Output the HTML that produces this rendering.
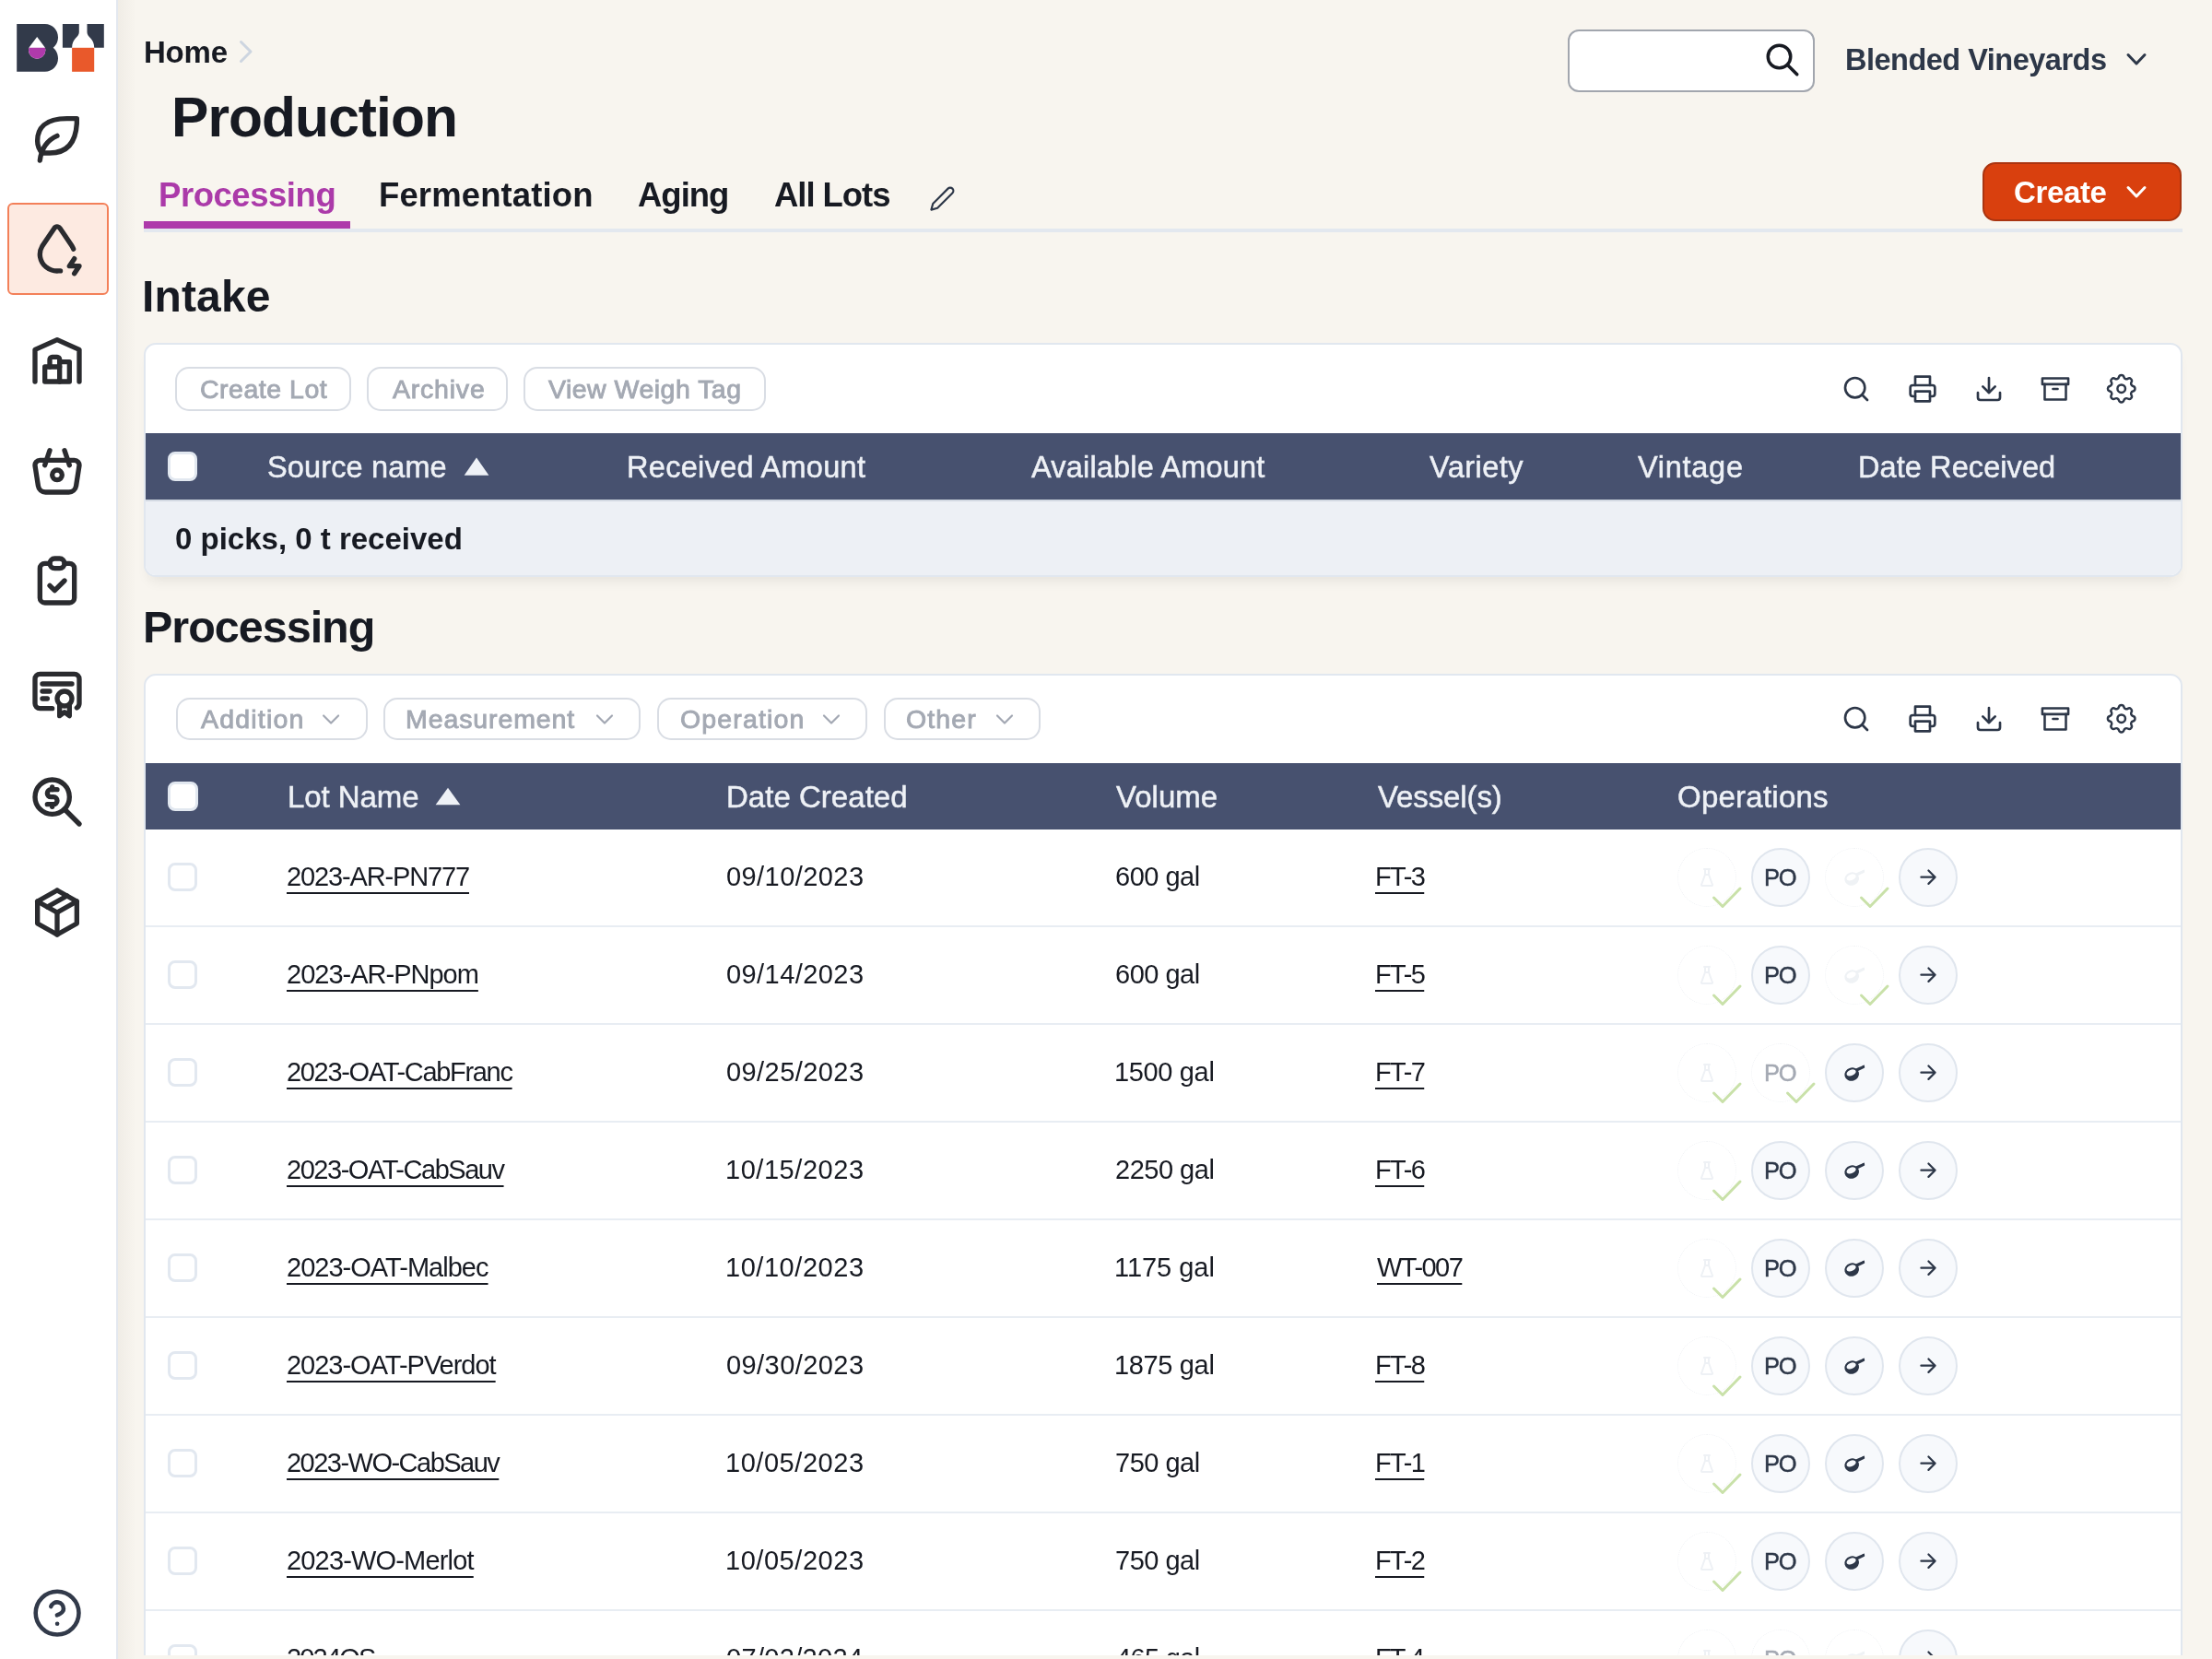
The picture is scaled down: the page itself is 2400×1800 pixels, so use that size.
<!DOCTYPE html><html><head><meta charset="utf-8"><style>
html,body{margin:0;padding:0}
body{width:2400px;height:1800px;overflow:hidden;position:relative;background:#f8f5ef;font-family:"Liberation Sans",sans-serif;}
.t{position:absolute;white-space:nowrap;will-change:transform;}
.ic{position:absolute;overflow:visible}
.abs{position:absolute;box-sizing:border-box}
</style></head><body>

<div class="abs" style="left:0;top:0;width:128px;height:1800px;background:#fff;border-right:2px solid #e3e8ef"></div>
<div class="abs" style="left:128px;top:0;width:20px;height:1800px;background:linear-gradient(to right,rgba(60,50,30,0.045),rgba(60,50,30,0))"></div>
<svg class="ic" style="left:0;top:0;width:126px;height:100px" viewBox="0 0 126 100">
<path fill="#323a4a" d="M18.2 26H48.8C57 26 63 32.5 63 40.5C63 45.5 60.5 49.5 57.7 51.8C60.5 54 63 58.5 63 63.3C63 71.3 57 77.8 48.8 77.8H18.2Z"/>
<path fill="#fff" d="M40.2 39.9L47.9 50.3C48.9 51.8 49.35 53.1 49.35 54.6A9.15 9.15 0 0 1 31.05 54.6C31.05 53.1 31.5 51.8 32.5 50.3Z"/>
<path fill="#b03aab" d="M31.55 51.8H48.85C49.2 52.7 49.35 53.6 49.35 54.6A9.15 9.15 0 0 1 31.05 54.6C31.05 53.6 31.2 52.7 31.55 51.8Z"/>
<path fill="#323a4a" d="M67.9 26H85.8V34.9C85.8 37.5 84 39.5 82 41.5C79.8 43.8 78.1 47 78.1 51.8H67.9Z"/>
<path fill="#323a4a" d="M94.5 26H112.8V51.8H102.2C102.2 47 100.5 43.8 98.3 41.5C96.3 39.5 94.5 37.5 94.5 34.9Z"/>
<rect x="78.1" y="51.8" width="24.1" height="26" fill="#e9592b"/>
</svg>
<div class="abs" style="left:8px;top:220px;width:110px;height:99.5px;background:#fdeae1;border:2px solid #f38059;border-radius:6px"></div>
<svg class="ic" style="left:30px;top:118px;width:64px;height:64px;" viewBox="0 0 24 24" fill="none" stroke="#2a2b2f" stroke-width="2" stroke-linecap="round" stroke-linejoin="round"><path d="M5 21c.5 -4.5 2.5 -8 7 -10"/><path d="M9 18c6.218 0 10.5 -3.288 11 -12v-2h-4.014c-9 0 -11.986 4 -12 9c0 1 0 3 2 5h3z"/></svg>
<svg class="ic" style="left:30px;top:238px;width:64px;height:64px;" viewBox="0 0 24 24" fill="none" stroke="#2a2b2f" stroke-width="2" stroke-linecap="round" stroke-linejoin="round"><path d="M18.628 12.076a6.653 6.653 0 0 0 -.564 -1.199l-4.89 -7.26c-.42 -.625 -1.287 -.803 -1.936 -.397a1.376 1.376 0 0 0 -.41 .397l-4.893 7.26c-1.695 2.838 -1.035 6.441 1.567 8.546a7.159 7.159 0 0 0 5.033 1.56h.8"/><path d="M19 16l-2 3h4l-2 3"/></svg>
<svg class="ic" style="left:30px;top:358px;width:64px;height:64px;" viewBox="0 0 24 24" fill="none" stroke="#2a2b2f" stroke-width="2" stroke-linecap="round" stroke-linejoin="round"><path d="M3 21v-13l9 -4l9 4v13"/><path d="M13 13h4v8h-10v-6h6"/><path d="M13 21v-9a1 1 0 0 0 -1 -1h-2a1 1 0 0 0 -1 1v3"/></svg>
<svg class="ic" style="left:30px;top:477.5px;width:64px;height:64px;" viewBox="0 0 24 24" fill="none" stroke="#2a2b2f" stroke-width="2" stroke-linecap="round" stroke-linejoin="round"><path d="M10 14a2 2 0 1 0 4 0a2 2 0 0 0 -4 0"/><path d="M5.001 8h13.999a2 2 0 0 1 1.977 2.304l-1.255 8.152a3 3 0 0 1 -2.966 2.544h-9.512a3 3 0 0 1 -2.965 -2.544l-1.255 -8.152a2 2 0 0 1 1.977 -2.304z"/><path d="M17 10l-2 -6"/><path d="M7 10l2 -6"/></svg>
<svg class="ic" style="left:30px;top:597.5px;width:64px;height:64px;" viewBox="0 0 24 24" fill="none" stroke="#2a2b2f" stroke-width="2" stroke-linecap="round" stroke-linejoin="round"><path d="M9 5h-2a2 2 0 0 0 -2 2v12a2 2 0 0 0 2 2h10a2 2 0 0 0 2 -2v-12a2 2 0 0 0 -2 -2h-2"/><path d="M9 3m0 2a2 2 0 0 1 2 -2h2a2 2 0 0 1 2 2v0a2 2 0 0 1 -2 2h-2a2 2 0 0 1 -2 -2z"/><path d="M9 14l2 2l4 -4"/></svg>
<svg class="ic" style="left:30px;top:717.75px;width:64px;height:64px;" viewBox="0 0 24 24" fill="none" stroke="#2a2b2f" stroke-width="2" stroke-linecap="round" stroke-linejoin="round"><path d="M15 15m-3 0a3 3 0 1 0 6 0a3 3 0 1 0 -6 0"/><path d="M13 17.5v4.5l2 -1.5l2 1.5v-4.5"/><path d="M10 19h-5a2 2 0 0 1 -2 -2v-10c0 -1.1 .9 -2 2 -2h14a2 2 0 0 1 2 2v10a2 2 0 0 1 -1 1.73"/><path d="M6 9l12 0"/><path d="M6 12l3 0"/><path d="M6 15l2 0"/></svg>
<svg class="ic" style="left:30px;top:837.75px;width:64px;height:64px;" viewBox="0 0 24 24" fill="none" stroke="#2a2b2f" stroke-width="2" stroke-linecap="round" stroke-linejoin="round"><path d="M10 10m-7 0a7 7 0 1 0 14 0a7 7 0 1 0 -14 0"/><path d="M21 21l-6 -6"/><path d="M12 7h-2.5a1.5 1.5 0 0 0 0 3h1a1.5 1.5 0 0 1 0 3h-2.5"/><path d="M10 13v1m0 -8v1"/></svg>
<svg class="ic" style="left:30px;top:958px;width:64px;height:64px;" viewBox="0 0 24 24" fill="none" stroke="#2a2b2f" stroke-width="2" stroke-linecap="round" stroke-linejoin="round"><path d="M12 3l8 4.5l0 9l-8 4.5l-8 -4.5l0 -9l8 -4.5"/><path d="M12 12l8 -4.5"/><path d="M12 12l0 9"/><path d="M12 12l-8 -4.5"/><path d="M16 5.25l-8 4.5"/></svg>
<svg class="ic" style="left:34px;top:1721.85px;width:56.2px;height:56.2px;" viewBox="0 0 24 24" fill="none" stroke="#323a4a" stroke-width="1.95" stroke-linecap="round" stroke-linejoin="round"><path d="M12 12m-10 0a10 10 0 1 0 20 0a10 10 0 1 0 -20 0"/><path d="M9.09 9a3 3 0 0 1 5.83 1c0 2-3 3-3 3"/><path d="M12 17h.01"/></svg>
<div class="t" style="left:155.60px;top:39.86px;font-size:33px;line-height:33px;font-weight:700;letter-spacing:-0.211px;color:#171a22;">Home</div>
<svg class="ic" style="left:0;top:0;width:1px;height:1px"><path d="M261.5 45.5L272 56L261.5 66.5" stroke="#cdd5e0" stroke-width="3" fill="none" stroke-linecap="round" stroke-linejoin="round"/></svg>
<div class="t" style="left:186.00px;top:96.57px;font-size:60.5px;line-height:60.5px;font-weight:700;letter-spacing:-0.925px;color:#171a22;">Production</div>
<div class="t" style="left:172.00px;top:194.10px;font-size:36.5px;line-height:36.5px;font-weight:700;letter-spacing:-0.453px;color:#ab3aa9;">Processing</div>
<div class="t" style="left:410.60px;top:194.10px;font-size:36.5px;line-height:36.5px;font-weight:700;letter-spacing:0.119px;color:#171a22;">Fermentation</div>
<div class="t" style="left:692.20px;top:194.10px;font-size:36.5px;line-height:36.5px;font-weight:700;letter-spacing:-0.998px;color:#171a22;">Aging</div>
<div class="t" style="left:840.00px;top:194.10px;font-size:36.5px;line-height:36.5px;font-weight:700;letter-spacing:-1.047px;color:#171a22;">All Lots</div>
<svg class="ic" style="left:1007.5px;top:201.4px;width:29px;height:29px;" viewBox="0 0 24 24" fill="none" stroke="#2d3748" stroke-width="1.8" stroke-linecap="round" stroke-linejoin="round"><path d="M17 3a2.828 2.828 0 1 1 4 4L7.5 20.5 2 22l1.5-5.5L17 3z"/></svg>
<div class="abs" style="left:156px;top:248px;width:2212px;height:4px;background:#e3e8ef"></div>
<div class="abs" style="left:156.3px;top:240px;width:223.7px;height:8px;background:#ae3aaa"></div>
<div class="abs" style="left:1701px;top:32px;width:268px;height:68px;background:#fff;border:2px solid #a2a6ae;border-radius:12px"></div>
<svg class="ic" style="left:1913px;top:44px;width:42px;height:42px;" viewBox="0 0 24 24" fill="none" stroke="#171a22" stroke-width="2" stroke-linecap="round" stroke-linejoin="round"><path d="M10 10m-7 0a7 7 0 1 0 14 0a7 7 0 1 0 -14 0"/><path d="M21 21l-6 -6"/></svg>
<div class="t" style="left:2001.90px;top:48.98px;font-size:32.5px;line-height:32.5px;font-weight:700;letter-spacing:-0.502px;color:#2d3748;">Blended Vineyards</div>
<svg class="ic" style="left:0;top:0;width:1px;height:1px"><path d="M2309 59.5L2318 69L2327 59.5" stroke="#2d3748" stroke-width="3" fill="none" stroke-linecap="round" stroke-linejoin="round"/></svg>
<div class="abs" style="left:2150.8px;top:176px;width:216.7px;height:63.5px;background:#d9400e;border:2px solid #aa3410;border-radius:14px"></div>
<div class="t" style="left:2185.00px;top:192.46px;font-size:33px;line-height:33px;font-weight:700;letter-spacing:-0.374px;color:#ffffff;">Create</div>
<svg class="ic" style="left:0;top:0;width:1px;height:1px"><path d="M2309 203.5L2318 213L2327 203.5" stroke="#ffffff" stroke-width="3" fill="none" stroke-linecap="round" stroke-linejoin="round"/></svg>
<div class="t" style="left:154.40px;top:297.86px;font-size:48px;line-height:48px;font-weight:700;letter-spacing:0.154px;color:#171a22;">Intake</div>
<div class="abs" style="left:156px;top:372px;width:2212px;height:254px;background:#fff;border:2px solid #e1e7ef;border-radius:13px;box-shadow:0 10px 14px -6px rgba(30,30,30,0.085);overflow:hidden"><div class="abs" style="left:0;top:96px;width:2210px;height:72px;background:#47516f"></div><div class="abs" style="left:0;top:168px;width:2210px;height:84px;background:#edf0f5;border-top:2px solid #d3d9e2"></div></div>
<div class="abs" style="left:190.2px;top:398px;width:191.3px;height:47.6px;border:2px solid #d9dde4;border-radius:15px;background:#fff"></div>
<div class="t" style="left:216.75px;top:407.87px;font-size:28.5px;line-height:28.5px;letter-spacing:0.515px;color:#a4a9b3;-webkit-text-stroke:0.9px #a4a9b3;">Create Lot</div>
<div class="abs" style="left:398.3px;top:398px;width:153.2px;height:47.6px;border:2px solid #d9dde4;border-radius:15px;background:#fff"></div>
<div class="t" style="left:425.75px;top:407.87px;font-size:28.5px;line-height:28.5px;letter-spacing:0.786px;color:#a4a9b3;-webkit-text-stroke:0.9px #a4a9b3;">Archive</div>
<div class="abs" style="left:568.2px;top:398px;width:263.3px;height:47.6px;border:2px solid #d9dde4;border-radius:15px;background:#fff"></div>
<div class="t" style="left:595.45px;top:407.87px;font-size:28.5px;line-height:28.5px;letter-spacing:0.480px;color:#a4a9b3;-webkit-text-stroke:0.9px #a4a9b3;">View Weigh Tag</div>
<svg class="ic" style="left:1998.2px;top:406px;width:32px;height:32px;" viewBox="0 0 24 24" fill="none" stroke="#2d3748" stroke-width="2" stroke-linecap="round" stroke-linejoin="round"><path d="M11 11m-8 0a8 8 0 1 0 16 0a8 8 0 1 0 -16 0"/><path d="M21 21l-4.3 -4.3"/></svg><svg class="ic" style="left:2070px;top:406px;width:32px;height:32px;" viewBox="0 0 24 24" fill="none" stroke="#2d3748" stroke-width="2" stroke-linecap="round" stroke-linejoin="round"><path d="M6 9V2h12v7"/><path d="M6 18H4a2 2 0 0 1-2-2v-5a2 2 0 0 1 2-2h16a2 2 0 0 1 2 2v5a2 2 0 0 1-2 2h-2"/><path d="M6 14h12v8h-12z"/></svg><svg class="ic" style="left:2142px;top:406px;width:32px;height:32px;" viewBox="0 0 24 24" fill="none" stroke="#2d3748" stroke-width="2" stroke-linecap="round" stroke-linejoin="round"><path d="M21 15v4a2 2 0 0 1-2 2H5a2 2 0 0 1-2-2v-4"/><path d="M7 10l5 5l5 -5"/><path d="M12 15V3"/></svg><svg class="ic" style="left:2214px;top:406px;width:32px;height:32px;transform:scale(0.96)" viewBox="0 0 24 24" fill="none" stroke="#2d3748" stroke-width="2" stroke-linecap="round" stroke-linejoin="round"><path d="M21 8v13H3V8"/><path d="M1 3h22v5H1z"/><path d="M10 12h4"/></svg><svg class="ic" style="left:2282.3px;top:402.3px;width:39.4px;height:39.4px;" viewBox="0 0 24 24" fill="none" stroke="#2d3748" stroke-width="1.5" stroke-linecap="round" stroke-linejoin="round"><path d="M10.325 4.317c.426 -1.756 2.924 -1.756 3.35 0a1.724 1.724 0 0 0 2.573 1.066c1.543 -.94 3.31 .826 2.37 2.37a1.724 1.724 0 0 0 1.065 2.572c1.756 .426 1.756 2.924 0 3.35a1.724 1.724 0 0 0 -1.066 2.573c.94 1.543 -.826 3.31 -2.37 2.37a1.724 1.724 0 0 0 -2.572 1.065c-.426 1.756 -2.924 1.756 -3.35 0a1.724 1.724 0 0 0 -2.573 -1.066c-1.543 .94 -3.31 -.826 -2.37 -2.37a1.724 1.724 0 0 0 -1.065 -2.572c-1.756 -.426 -1.756 -2.924 0 -3.35a1.724 1.724 0 0 0 1.066 -2.573c-.94 -1.543 .826 -3.31 2.37 -2.37c1 .608 2.296 .07 2.572 -1.065z"/><path d="M9.4 12a2.6 2.6 0 1 0 5.2 0a2.6 2.6 0 0 0 -5.2 0"/></svg>
<div class="abs" style="left:181.8px;top:489.7px;width:32.5px;height:32px;background:#fff;border:3.8px solid #e2e8f0;border-radius:8px"></div>
<div class="t" style="left:289.75px;top:490.98px;font-size:32.5px;line-height:32.5px;letter-spacing:0.137px;color:#eef1f6;-webkit-text-stroke:0.5px #eef1f6;">Source name</div>
<svg class="ic" style="left:0;top:0;width:1px;height:1px"><path d="M503.7 515.8L517 496.4L530.4 515.8Z" fill="#eef1f6"/></svg>
<div class="t" style="left:679.95px;top:490.98px;font-size:32.5px;line-height:32.5px;letter-spacing:0.307px;color:#eef1f6;-webkit-text-stroke:0.5px #eef1f6;">Received Amount</div>
<div class="t" style="left:1118.65px;top:490.98px;font-size:32.5px;line-height:32.5px;letter-spacing:0.186px;color:#eef1f6;-webkit-text-stroke:0.5px #eef1f6;">Available Amount</div>
<div class="t" style="left:1550.65px;top:490.98px;font-size:32.5px;line-height:32.5px;letter-spacing:0.469px;color:#eef1f6;-webkit-text-stroke:0.5px #eef1f6;">Variety</div>
<div class="t" style="left:1776.95px;top:490.98px;font-size:32.5px;line-height:32.5px;letter-spacing:0.723px;color:#eef1f6;-webkit-text-stroke:0.5px #eef1f6;">Vintage</div>
<div class="t" style="left:2016.25px;top:490.98px;font-size:32.5px;line-height:32.5px;letter-spacing:0.084px;color:#eef1f6;-webkit-text-stroke:0.5px #eef1f6;">Date Received</div>
<div class="t" style="left:189.90px;top:568.06px;font-size:33px;line-height:33px;font-weight:700;letter-spacing:0.000px;color:#171a22;">0 picks, 0 t received</div>
<div class="t" style="left:154.50px;top:655.64px;font-size:48.5px;line-height:48.5px;font-weight:700;letter-spacing:-1.016px;color:#171a22;">Processing</div>
<div class="abs" style="left:0;top:0;width:2400px;height:1796px;overflow:hidden">
<div class="abs" style="left:156px;top:730.8px;width:2212px;height:1200px;background:#fff;border:2px solid #e1e7ef;border-radius:13px;overflow:hidden"><div class="abs" style="left:0;top:95.5px;width:2210px;height:71.5px;background:#47516f"></div></div>
<div class="abs" style="left:190.6px;top:756.6px;width:208.0px;height:46.3px;border:2px solid #d9dde4;border-radius:15px;background:#fff"></div>
<div class="t" style="left:217.55px;top:766.27px;font-size:28.5px;line-height:28.5px;letter-spacing:1.208px;color:#a4a9b3;-webkit-text-stroke:0.9px #a4a9b3;">Addition</div>
<svg class="ic" style="left:0;top:0;width:1px;height:1px"><path d="M351.1 776.5L359.1 784.5L367.1 776.5" stroke="#a3a8b3" stroke-width="2.2" fill="none" stroke-linecap="round" stroke-linejoin="round"/></svg>
<div class="abs" style="left:415.8px;top:756.6px;width:278.9px;height:46.3px;border:2px solid #d9dde4;border-radius:15px;background:#fff"></div>
<div class="t" style="left:440.45px;top:766.27px;font-size:28.5px;line-height:28.5px;letter-spacing:0.898px;color:#a4a9b3;-webkit-text-stroke:0.9px #a4a9b3;">Measurement</div>
<svg class="ic" style="left:0;top:0;width:1px;height:1px"><path d="M648 776.5L656 784.5L664 776.5" stroke="#a3a8b3" stroke-width="2.2" fill="none" stroke-linecap="round" stroke-linejoin="round"/></svg>
<div class="abs" style="left:712.7px;top:756.6px;width:228.3px;height:46.3px;border:2px solid #d9dde4;border-radius:15px;background:#fff"></div>
<div class="t" style="left:737.95px;top:766.27px;font-size:28.5px;line-height:28.5px;letter-spacing:1.149px;color:#a4a9b3;-webkit-text-stroke:0.9px #a4a9b3;">Operation</div>
<svg class="ic" style="left:0;top:0;width:1px;height:1px"><path d="M894 776.5L902 784.5L910 776.5" stroke="#a3a8b3" stroke-width="2.2" fill="none" stroke-linecap="round" stroke-linejoin="round"/></svg>
<div class="abs" style="left:958.5px;top:756.6px;width:170.6px;height:46.3px;border:2px solid #d9dde4;border-radius:15px;background:#fff"></div>
<div class="t" style="left:983.35px;top:766.27px;font-size:28.5px;line-height:28.5px;letter-spacing:1.103px;color:#a4a9b3;-webkit-text-stroke:0.9px #a4a9b3;">Other</div>
<svg class="ic" style="left:0;top:0;width:1px;height:1px"><path d="M1082 776.5L1090 784.5L1098 776.5" stroke="#a3a8b3" stroke-width="2.2" fill="none" stroke-linecap="round" stroke-linejoin="round"/></svg>
<svg class="ic" style="left:1998.2px;top:764px;width:32px;height:32px;" viewBox="0 0 24 24" fill="none" stroke="#2d3748" stroke-width="2" stroke-linecap="round" stroke-linejoin="round"><path d="M11 11m-8 0a8 8 0 1 0 16 0a8 8 0 1 0 -16 0"/><path d="M21 21l-4.3 -4.3"/></svg><svg class="ic" style="left:2070px;top:764px;width:32px;height:32px;" viewBox="0 0 24 24" fill="none" stroke="#2d3748" stroke-width="2" stroke-linecap="round" stroke-linejoin="round"><path d="M6 9V2h12v7"/><path d="M6 18H4a2 2 0 0 1-2-2v-5a2 2 0 0 1 2-2h16a2 2 0 0 1 2 2v5a2 2 0 0 1-2 2h-2"/><path d="M6 14h12v8h-12z"/></svg><svg class="ic" style="left:2142px;top:764px;width:32px;height:32px;" viewBox="0 0 24 24" fill="none" stroke="#2d3748" stroke-width="2" stroke-linecap="round" stroke-linejoin="round"><path d="M21 15v4a2 2 0 0 1-2 2H5a2 2 0 0 1-2-2v-4"/><path d="M7 10l5 5l5 -5"/><path d="M12 15V3"/></svg><svg class="ic" style="left:2214px;top:764px;width:32px;height:32px;transform:scale(0.96)" viewBox="0 0 24 24" fill="none" stroke="#2d3748" stroke-width="2" stroke-linecap="round" stroke-linejoin="round"><path d="M21 8v13H3V8"/><path d="M1 3h22v5H1z"/><path d="M10 12h4"/></svg><svg class="ic" style="left:2282.3px;top:760.3px;width:39.4px;height:39.4px;" viewBox="0 0 24 24" fill="none" stroke="#2d3748" stroke-width="1.5" stroke-linecap="round" stroke-linejoin="round"><path d="M10.325 4.317c.426 -1.756 2.924 -1.756 3.35 0a1.724 1.724 0 0 0 2.573 1.066c1.543 -.94 3.31 .826 2.37 2.37a1.724 1.724 0 0 0 1.065 2.572c1.756 .426 1.756 2.924 0 3.35a1.724 1.724 0 0 0 -1.066 2.573c.94 1.543 -.826 3.31 -2.37 2.37a1.724 1.724 0 0 0 -2.572 1.065c-.426 1.756 -2.924 1.756 -3.35 0a1.724 1.724 0 0 0 -2.573 -1.066c-1.543 .94 -3.31 -.826 -2.37 -2.37a1.724 1.724 0 0 0 -1.065 -2.572c-1.756 -.426 -1.756 -2.924 0 -3.35a1.724 1.724 0 0 0 1.066 -2.573c-.94 -1.543 .826 -3.31 2.37 -2.37c1 .608 2.296 .07 2.572 -1.065z"/><path d="M9.4 12a2.6 2.6 0 1 0 5.2 0a2.6 2.6 0 0 0 -5.2 0"/></svg>
<div class="abs" style="left:182.4px;top:848.4px;width:32.5px;height:32px;background:#fff;border:3.8px solid #e2e8f0;border-radius:8px"></div>
<div class="t" style="left:311.55px;top:848.16px;font-size:33px;line-height:33px;letter-spacing:-0.074px;color:#eef1f6;-webkit-text-stroke:0.5px #eef1f6;">Lot Name</div>
<svg class="ic" style="left:0;top:0;width:1px;height:1px"><path d="M472.6 873.3L486 854.7L499.4 873.3Z" fill="#eef1f6"/></svg>
<div class="t" style="left:787.55px;top:848.16px;font-size:33px;line-height:33px;letter-spacing:0.025px;color:#eef1f6;-webkit-text-stroke:0.5px #eef1f6;">Date Created</div>
<div class="t" style="left:1210.75px;top:848.16px;font-size:33px;line-height:33px;letter-spacing:0.017px;color:#eef1f6;-webkit-text-stroke:0.5px #eef1f6;">Volume</div>
<div class="t" style="left:1494.95px;top:848.16px;font-size:33px;line-height:33px;letter-spacing:-0.115px;color:#eef1f6;-webkit-text-stroke:0.5px #eef1f6;">Vessel(s)</div>
<div class="t" style="left:1819.65px;top:848.16px;font-size:33px;line-height:33px;letter-spacing:0.242px;color:#eef1f6;-webkit-text-stroke:0.5px #eef1f6;">Operations</div>
<div class="abs" style="left:182.3px;top:936.4px;width:32px;height:31px;background:#fff;border:3.2px solid #e2e8f0;border-radius:8px"></div>
<div class="t" style="left:311.10px;top:937.35px;font-size:29px;line-height:29px;letter-spacing:-1.138px;color:#171a22;text-decoration:underline;text-decoration-thickness:2px;text-underline-offset:7px;">2023-AR-PN777</div>
<div class="t" style="left:787.60px;top:937.35px;font-size:29px;line-height:29px;letter-spacing:0.432px;color:#171a22;">09/10/2023</div>
<div class="t" style="left:1209.80px;top:937.35px;font-size:29px;line-height:29px;letter-spacing:-0.500px;color:#171a22;">600 gal</div>
<div class="t" style="left:1491.60px;top:937.35px;font-size:29px;line-height:29px;letter-spacing:-1.595px;color:#171a22;text-decoration:underline;text-decoration-thickness:2px;text-underline-offset:7px;">FT-3</div>
<div class="abs" style="left:1820px;top:920px;width:64px;height:64px;border-radius:50%;border:1.5px dotted #f0f2f5"></div>
<svg class="ic" style="left:1840px;top:940px;width:24px;height:24px;" viewBox="0 0 24 24" fill="none" stroke="#eef1f5" stroke-width="2" stroke-linecap="round" stroke-linejoin="round"><path d="M9 3h6"/><path d="M10 9h4"/><path d="M10 3v6l-4 11a.7 .7 0 0 0 .5 1h11a.7 .7 0 0 0 .5 -1l-4 -11v-6"/></svg>
<svg class="ic" style="left:0;top:0;width:1px;height:1px"><path d="M1859.5 974L1869 983.5L1888 964" stroke="#c9e1a9" stroke-width="3" fill="none" stroke-linecap="round" stroke-linejoin="round"/></svg>
<div class="abs" style="left:1900px;top:920px;width:64px;height:64px;border-radius:50%;background:#f7f9fc;border:2px solid #e0e6ee"></div>
<div class="t" style="left:1913.52px;top:939.71px;font-size:25.5px;line-height:25.5px;letter-spacing:-1.258px;color:#2d3748;-webkit-text-stroke:0.45px #2d3748;">PO</div>
<div class="abs" style="left:1980px;top:920px;width:64px;height:64px;border-radius:50%;border:1.5px dotted #f0f2f5"></div>
<svg class="ic" style="left:2000px;top:940px;width:24px;height:24px" viewBox="0 0 24 24"><path d="M13.5 9.2C16 8 18.5 7 21.6 5.6" stroke="#eff2f5" stroke-width="3.2" stroke-linecap="round" fill="none"/><path d="M20.5 4.2L23 3.6L22.6 6.8Z" fill="#eff2f5"/><ellipse cx="9.2" cy="13.6" rx="7.9" ry="7.2" transform="rotate(-15 9.2 13.6)" fill="#eff2f5"/><ellipse cx="8.6" cy="11.9" rx="5.3" ry="3.2" transform="rotate(-22 8.6 11.9)" fill="#ffffff"/></svg>
<svg class="ic" style="left:0;top:0;width:1px;height:1px"><path d="M2019.5 974L2029 983.5L2048 964" stroke="#c9e1a9" stroke-width="3" fill="none" stroke-linecap="round" stroke-linejoin="round"/></svg>
<div class="abs" style="left:2060px;top:920px;width:64px;height:64px;border-radius:50%;background:#f7f9fc;border:2px solid #e0e6ee"></div>
<svg class="ic" style="left:0;top:0;width:1px;height:1px"><path d="M2084.4 951.7H2099.6M2092.4 944.5L2099.6 951.7L2092.4 958.9" stroke="#2d3748" stroke-width="2.2" fill="none" stroke-linecap="round" stroke-linejoin="round"/></svg>
<div class="abs" style="left:158px;top:1004.00px;width:2208px;height:2px;background:#e8edf3"></div>
<div class="abs" style="left:182.3px;top:1042.4px;width:32px;height:31px;background:#fff;border:3.2px solid #e2e8f0;border-radius:8px"></div>
<div class="t" style="left:311.10px;top:1043.35px;font-size:29px;line-height:29px;letter-spacing:-0.996px;color:#171a22;text-decoration:underline;text-decoration-thickness:2px;text-underline-offset:7px;">2023-AR-PNpom</div>
<div class="t" style="left:787.60px;top:1043.35px;font-size:29px;line-height:29px;letter-spacing:0.432px;color:#171a22;">09/14/2023</div>
<div class="t" style="left:1209.80px;top:1043.35px;font-size:29px;line-height:29px;letter-spacing:-0.500px;color:#171a22;">600 gal</div>
<div class="t" style="left:1491.60px;top:1043.35px;font-size:29px;line-height:29px;letter-spacing:-1.595px;color:#171a22;text-decoration:underline;text-decoration-thickness:2px;text-underline-offset:7px;">FT-5</div>
<div class="abs" style="left:1820px;top:1026px;width:64px;height:64px;border-radius:50%;border:1.5px dotted #f0f2f5"></div>
<svg class="ic" style="left:1840px;top:1046px;width:24px;height:24px;" viewBox="0 0 24 24" fill="none" stroke="#eef1f5" stroke-width="2" stroke-linecap="round" stroke-linejoin="round"><path d="M9 3h6"/><path d="M10 9h4"/><path d="M10 3v6l-4 11a.7 .7 0 0 0 .5 1h11a.7 .7 0 0 0 .5 -1l-4 -11v-6"/></svg>
<svg class="ic" style="left:0;top:0;width:1px;height:1px"><path d="M1859.5 1080L1869 1089.5L1888 1070" stroke="#c9e1a9" stroke-width="3" fill="none" stroke-linecap="round" stroke-linejoin="round"/></svg>
<div class="abs" style="left:1900px;top:1026px;width:64px;height:64px;border-radius:50%;background:#f7f9fc;border:2px solid #e0e6ee"></div>
<div class="t" style="left:1913.52px;top:1045.71px;font-size:25.5px;line-height:25.5px;letter-spacing:-1.258px;color:#2d3748;-webkit-text-stroke:0.45px #2d3748;">PO</div>
<div class="abs" style="left:1980px;top:1026px;width:64px;height:64px;border-radius:50%;border:1.5px dotted #f0f2f5"></div>
<svg class="ic" style="left:2000px;top:1046px;width:24px;height:24px" viewBox="0 0 24 24"><path d="M13.5 9.2C16 8 18.5 7 21.6 5.6" stroke="#eff2f5" stroke-width="3.2" stroke-linecap="round" fill="none"/><path d="M20.5 4.2L23 3.6L22.6 6.8Z" fill="#eff2f5"/><ellipse cx="9.2" cy="13.6" rx="7.9" ry="7.2" transform="rotate(-15 9.2 13.6)" fill="#eff2f5"/><ellipse cx="8.6" cy="11.9" rx="5.3" ry="3.2" transform="rotate(-22 8.6 11.9)" fill="#ffffff"/></svg>
<svg class="ic" style="left:0;top:0;width:1px;height:1px"><path d="M2019.5 1080L2029 1089.5L2048 1070" stroke="#c9e1a9" stroke-width="3" fill="none" stroke-linecap="round" stroke-linejoin="round"/></svg>
<div class="abs" style="left:2060px;top:1026px;width:64px;height:64px;border-radius:50%;background:#f7f9fc;border:2px solid #e0e6ee"></div>
<svg class="ic" style="left:0;top:0;width:1px;height:1px"><path d="M2084.4 1057.7H2099.6M2092.4 1050.5L2099.6 1057.7L2092.4 1064.9" stroke="#2d3748" stroke-width="2.2" fill="none" stroke-linecap="round" stroke-linejoin="round"/></svg>
<div class="abs" style="left:158px;top:1110.00px;width:2208px;height:2px;background:#e8edf3"></div>
<div class="abs" style="left:182.3px;top:1148.4px;width:32px;height:31px;background:#fff;border:3.2px solid #e2e8f0;border-radius:8px"></div>
<div class="t" style="left:311.10px;top:1149.35px;font-size:29px;line-height:29px;letter-spacing:-1.320px;color:#171a22;text-decoration:underline;text-decoration-thickness:2px;text-underline-offset:7px;">2023-OAT-CabFranc</div>
<div class="t" style="left:787.60px;top:1149.35px;font-size:29px;line-height:29px;letter-spacing:0.432px;color:#171a22;">09/25/2023</div>
<div class="t" style="left:1208.80px;top:1149.35px;font-size:29px;line-height:29px;letter-spacing:-0.347px;color:#171a22;">1500 gal</div>
<div class="t" style="left:1491.60px;top:1149.35px;font-size:29px;line-height:29px;letter-spacing:-1.595px;color:#171a22;text-decoration:underline;text-decoration-thickness:2px;text-underline-offset:7px;">FT-7</div>
<div class="abs" style="left:1820px;top:1132px;width:64px;height:64px;border-radius:50%;border:1.5px dotted #f0f2f5"></div>
<svg class="ic" style="left:1840px;top:1152px;width:24px;height:24px;" viewBox="0 0 24 24" fill="none" stroke="#eef1f5" stroke-width="2" stroke-linecap="round" stroke-linejoin="round"><path d="M9 3h6"/><path d="M10 9h4"/><path d="M10 3v6l-4 11a.7 .7 0 0 0 .5 1h11a.7 .7 0 0 0 .5 -1l-4 -11v-6"/></svg>
<svg class="ic" style="left:0;top:0;width:1px;height:1px"><path d="M1859.5 1186L1869 1195.5L1888 1176" stroke="#c9e1a9" stroke-width="3" fill="none" stroke-linecap="round" stroke-linejoin="round"/></svg>
<div class="abs" style="left:1900px;top:1132px;width:64px;height:64px;border-radius:50%;border:1.5px dotted #f0f2f5"></div>
<div class="t" style="left:1913.52px;top:1151.71px;font-size:25.5px;line-height:25.5px;letter-spacing:-1.258px;color:#a4a9b3;-webkit-text-stroke:0.45px #a4a9b3;">PO</div>
<svg class="ic" style="left:0;top:0;width:1px;height:1px"><path d="M1939.5 1186L1949 1195.5L1968 1176" stroke="#c9e1a9" stroke-width="3" fill="none" stroke-linecap="round" stroke-linejoin="round"/></svg>
<div class="abs" style="left:1980px;top:1132px;width:64px;height:64px;border-radius:50%;background:#f7f9fc;border:2px solid #e0e6ee"></div>
<svg class="ic" style="left:2000px;top:1152px;width:24px;height:24px" viewBox="0 0 24 24"><path d="M13.5 9.2C16 8 18.5 7 21.6 5.6" stroke="#2d3748" stroke-width="3.2" stroke-linecap="round" fill="none"/><path d="M20.5 4.2L23 3.6L22.6 6.8Z" fill="#2d3748"/><ellipse cx="9.2" cy="13.6" rx="7.9" ry="7.2" transform="rotate(-15 9.2 13.6)" fill="#2d3748"/><ellipse cx="8.6" cy="11.9" rx="5.3" ry="3.2" transform="rotate(-22 8.6 11.9)" fill="#f7f9fc"/></svg>
<div class="abs" style="left:2060px;top:1132px;width:64px;height:64px;border-radius:50%;background:#f7f9fc;border:2px solid #e0e6ee"></div>
<svg class="ic" style="left:0;top:0;width:1px;height:1px"><path d="M2084.4 1163.7H2099.6M2092.4 1156.5L2099.6 1163.7L2092.4 1170.9" stroke="#2d3748" stroke-width="2.2" fill="none" stroke-linecap="round" stroke-linejoin="round"/></svg>
<div class="abs" style="left:158px;top:1216.00px;width:2208px;height:2px;background:#e8edf3"></div>
<div class="abs" style="left:182.3px;top:1254.4px;width:32px;height:31px;background:#fff;border:3.2px solid #e2e8f0;border-radius:8px"></div>
<div class="t" style="left:311.10px;top:1255.35px;font-size:29px;line-height:29px;letter-spacing:-1.466px;color:#171a22;text-decoration:underline;text-decoration-thickness:2px;text-underline-offset:7px;">2023-OAT-CabSauv</div>
<div class="t" style="left:786.60px;top:1255.35px;font-size:29px;line-height:29px;letter-spacing:0.543px;color:#171a22;">10/15/2023</div>
<div class="t" style="left:1209.80px;top:1255.35px;font-size:29px;line-height:29px;letter-spacing:-0.490px;color:#171a22;">2250 gal</div>
<div class="t" style="left:1491.60px;top:1255.35px;font-size:29px;line-height:29px;letter-spacing:-1.595px;color:#171a22;text-decoration:underline;text-decoration-thickness:2px;text-underline-offset:7px;">FT-6</div>
<div class="abs" style="left:1820px;top:1238px;width:64px;height:64px;border-radius:50%;border:1.5px dotted #f0f2f5"></div>
<svg class="ic" style="left:1840px;top:1258px;width:24px;height:24px;" viewBox="0 0 24 24" fill="none" stroke="#eef1f5" stroke-width="2" stroke-linecap="round" stroke-linejoin="round"><path d="M9 3h6"/><path d="M10 9h4"/><path d="M10 3v6l-4 11a.7 .7 0 0 0 .5 1h11a.7 .7 0 0 0 .5 -1l-4 -11v-6"/></svg>
<svg class="ic" style="left:0;top:0;width:1px;height:1px"><path d="M1859.5 1292L1869 1301.5L1888 1282" stroke="#c9e1a9" stroke-width="3" fill="none" stroke-linecap="round" stroke-linejoin="round"/></svg>
<div class="abs" style="left:1900px;top:1238px;width:64px;height:64px;border-radius:50%;background:#f7f9fc;border:2px solid #e0e6ee"></div>
<div class="t" style="left:1913.52px;top:1257.71px;font-size:25.5px;line-height:25.5px;letter-spacing:-1.258px;color:#2d3748;-webkit-text-stroke:0.45px #2d3748;">PO</div>
<div class="abs" style="left:1980px;top:1238px;width:64px;height:64px;border-radius:50%;background:#f7f9fc;border:2px solid #e0e6ee"></div>
<svg class="ic" style="left:2000px;top:1258px;width:24px;height:24px" viewBox="0 0 24 24"><path d="M13.5 9.2C16 8 18.5 7 21.6 5.6" stroke="#2d3748" stroke-width="3.2" stroke-linecap="round" fill="none"/><path d="M20.5 4.2L23 3.6L22.6 6.8Z" fill="#2d3748"/><ellipse cx="9.2" cy="13.6" rx="7.9" ry="7.2" transform="rotate(-15 9.2 13.6)" fill="#2d3748"/><ellipse cx="8.6" cy="11.9" rx="5.3" ry="3.2" transform="rotate(-22 8.6 11.9)" fill="#f7f9fc"/></svg>
<div class="abs" style="left:2060px;top:1238px;width:64px;height:64px;border-radius:50%;background:#f7f9fc;border:2px solid #e0e6ee"></div>
<svg class="ic" style="left:0;top:0;width:1px;height:1px"><path d="M2084.4 1269.7H2099.6M2092.4 1262.5L2099.6 1269.7L2092.4 1276.9" stroke="#2d3748" stroke-width="2.2" fill="none" stroke-linecap="round" stroke-linejoin="round"/></svg>
<div class="abs" style="left:158px;top:1322.00px;width:2208px;height:2px;background:#e8edf3"></div>
<div class="abs" style="left:182.3px;top:1360.4px;width:32px;height:31px;background:#fff;border:3.2px solid #e2e8f0;border-radius:8px"></div>
<div class="t" style="left:311.10px;top:1361.35px;font-size:29px;line-height:29px;letter-spacing:-0.977px;color:#171a22;text-decoration:underline;text-decoration-thickness:2px;text-underline-offset:7px;">2023-OAT-Malbec</div>
<div class="t" style="left:786.60px;top:1361.35px;font-size:29px;line-height:29px;letter-spacing:0.543px;color:#171a22;">10/10/2023</div>
<div class="t" style="left:1208.80px;top:1361.35px;font-size:29px;line-height:29px;letter-spacing:-0.039px;color:#171a22;">1175 gal</div>
<div class="t" style="left:1493.60px;top:1361.35px;font-size:29px;line-height:29px;letter-spacing:-1.540px;color:#171a22;text-decoration:underline;text-decoration-thickness:2px;text-underline-offset:7px;">WT-007</div>
<div class="abs" style="left:1820px;top:1344px;width:64px;height:64px;border-radius:50%;border:1.5px dotted #f0f2f5"></div>
<svg class="ic" style="left:1840px;top:1364px;width:24px;height:24px;" viewBox="0 0 24 24" fill="none" stroke="#eef1f5" stroke-width="2" stroke-linecap="round" stroke-linejoin="round"><path d="M9 3h6"/><path d="M10 9h4"/><path d="M10 3v6l-4 11a.7 .7 0 0 0 .5 1h11a.7 .7 0 0 0 .5 -1l-4 -11v-6"/></svg>
<svg class="ic" style="left:0;top:0;width:1px;height:1px"><path d="M1859.5 1398L1869 1407.5L1888 1388" stroke="#c9e1a9" stroke-width="3" fill="none" stroke-linecap="round" stroke-linejoin="round"/></svg>
<div class="abs" style="left:1900px;top:1344px;width:64px;height:64px;border-radius:50%;background:#f7f9fc;border:2px solid #e0e6ee"></div>
<div class="t" style="left:1913.52px;top:1363.71px;font-size:25.5px;line-height:25.5px;letter-spacing:-1.258px;color:#2d3748;-webkit-text-stroke:0.45px #2d3748;">PO</div>
<div class="abs" style="left:1980px;top:1344px;width:64px;height:64px;border-radius:50%;background:#f7f9fc;border:2px solid #e0e6ee"></div>
<svg class="ic" style="left:2000px;top:1364px;width:24px;height:24px" viewBox="0 0 24 24"><path d="M13.5 9.2C16 8 18.5 7 21.6 5.6" stroke="#2d3748" stroke-width="3.2" stroke-linecap="round" fill="none"/><path d="M20.5 4.2L23 3.6L22.6 6.8Z" fill="#2d3748"/><ellipse cx="9.2" cy="13.6" rx="7.9" ry="7.2" transform="rotate(-15 9.2 13.6)" fill="#2d3748"/><ellipse cx="8.6" cy="11.9" rx="5.3" ry="3.2" transform="rotate(-22 8.6 11.9)" fill="#f7f9fc"/></svg>
<div class="abs" style="left:2060px;top:1344px;width:64px;height:64px;border-radius:50%;background:#f7f9fc;border:2px solid #e0e6ee"></div>
<svg class="ic" style="left:0;top:0;width:1px;height:1px"><path d="M2084.4 1375.7H2099.6M2092.4 1368.5L2099.6 1375.7L2092.4 1382.9" stroke="#2d3748" stroke-width="2.2" fill="none" stroke-linecap="round" stroke-linejoin="round"/></svg>
<div class="abs" style="left:158px;top:1428.00px;width:2208px;height:2px;background:#e8edf3"></div>
<div class="abs" style="left:182.3px;top:1466.4px;width:32px;height:31px;background:#fff;border:3.2px solid #e2e8f0;border-radius:8px"></div>
<div class="t" style="left:311.10px;top:1467.35px;font-size:29px;line-height:29px;letter-spacing:-1.015px;color:#171a22;text-decoration:underline;text-decoration-thickness:2px;text-underline-offset:7px;">2023-OAT-PVerdot</div>
<div class="t" style="left:787.60px;top:1467.35px;font-size:29px;line-height:29px;letter-spacing:0.432px;color:#171a22;">09/30/2023</div>
<div class="t" style="left:1208.80px;top:1467.35px;font-size:29px;line-height:29px;letter-spacing:-0.347px;color:#171a22;">1875 gal</div>
<div class="t" style="left:1491.60px;top:1467.35px;font-size:29px;line-height:29px;letter-spacing:-1.595px;color:#171a22;text-decoration:underline;text-decoration-thickness:2px;text-underline-offset:7px;">FT-8</div>
<div class="abs" style="left:1820px;top:1450px;width:64px;height:64px;border-radius:50%;border:1.5px dotted #f0f2f5"></div>
<svg class="ic" style="left:1840px;top:1470px;width:24px;height:24px;" viewBox="0 0 24 24" fill="none" stroke="#eef1f5" stroke-width="2" stroke-linecap="round" stroke-linejoin="round"><path d="M9 3h6"/><path d="M10 9h4"/><path d="M10 3v6l-4 11a.7 .7 0 0 0 .5 1h11a.7 .7 0 0 0 .5 -1l-4 -11v-6"/></svg>
<svg class="ic" style="left:0;top:0;width:1px;height:1px"><path d="M1859.5 1504L1869 1513.5L1888 1494" stroke="#c9e1a9" stroke-width="3" fill="none" stroke-linecap="round" stroke-linejoin="round"/></svg>
<div class="abs" style="left:1900px;top:1450px;width:64px;height:64px;border-radius:50%;background:#f7f9fc;border:2px solid #e0e6ee"></div>
<div class="t" style="left:1913.52px;top:1469.71px;font-size:25.5px;line-height:25.5px;letter-spacing:-1.258px;color:#2d3748;-webkit-text-stroke:0.45px #2d3748;">PO</div>
<div class="abs" style="left:1980px;top:1450px;width:64px;height:64px;border-radius:50%;background:#f7f9fc;border:2px solid #e0e6ee"></div>
<svg class="ic" style="left:2000px;top:1470px;width:24px;height:24px" viewBox="0 0 24 24"><path d="M13.5 9.2C16 8 18.5 7 21.6 5.6" stroke="#2d3748" stroke-width="3.2" stroke-linecap="round" fill="none"/><path d="M20.5 4.2L23 3.6L22.6 6.8Z" fill="#2d3748"/><ellipse cx="9.2" cy="13.6" rx="7.9" ry="7.2" transform="rotate(-15 9.2 13.6)" fill="#2d3748"/><ellipse cx="8.6" cy="11.9" rx="5.3" ry="3.2" transform="rotate(-22 8.6 11.9)" fill="#f7f9fc"/></svg>
<div class="abs" style="left:2060px;top:1450px;width:64px;height:64px;border-radius:50%;background:#f7f9fc;border:2px solid #e0e6ee"></div>
<svg class="ic" style="left:0;top:0;width:1px;height:1px"><path d="M2084.4 1481.7H2099.6M2092.4 1474.5L2099.6 1481.7L2092.4 1488.9" stroke="#2d3748" stroke-width="2.2" fill="none" stroke-linecap="round" stroke-linejoin="round"/></svg>
<div class="abs" style="left:158px;top:1534.00px;width:2208px;height:2px;background:#e8edf3"></div>
<div class="abs" style="left:182.3px;top:1572.4px;width:32px;height:31px;background:#fff;border:3.2px solid #e2e8f0;border-radius:8px"></div>
<div class="t" style="left:311.10px;top:1573.35px;font-size:29px;line-height:29px;letter-spacing:-1.518px;color:#171a22;text-decoration:underline;text-decoration-thickness:2px;text-underline-offset:7px;">2023-WO-CabSauv</div>
<div class="t" style="left:786.60px;top:1573.35px;font-size:29px;line-height:29px;letter-spacing:0.543px;color:#171a22;">10/05/2023</div>
<div class="t" style="left:1209.80px;top:1573.35px;font-size:29px;line-height:29px;letter-spacing:-0.500px;color:#171a22;">750 gal</div>
<div class="t" style="left:1491.60px;top:1573.35px;font-size:29px;line-height:29px;letter-spacing:-1.595px;color:#171a22;text-decoration:underline;text-decoration-thickness:2px;text-underline-offset:7px;">FT-1</div>
<div class="abs" style="left:1820px;top:1556px;width:64px;height:64px;border-radius:50%;border:1.5px dotted #f0f2f5"></div>
<svg class="ic" style="left:1840px;top:1576px;width:24px;height:24px;" viewBox="0 0 24 24" fill="none" stroke="#eef1f5" stroke-width="2" stroke-linecap="round" stroke-linejoin="round"><path d="M9 3h6"/><path d="M10 9h4"/><path d="M10 3v6l-4 11a.7 .7 0 0 0 .5 1h11a.7 .7 0 0 0 .5 -1l-4 -11v-6"/></svg>
<svg class="ic" style="left:0;top:0;width:1px;height:1px"><path d="M1859.5 1610L1869 1619.5L1888 1600" stroke="#c9e1a9" stroke-width="3" fill="none" stroke-linecap="round" stroke-linejoin="round"/></svg>
<div class="abs" style="left:1900px;top:1556px;width:64px;height:64px;border-radius:50%;background:#f7f9fc;border:2px solid #e0e6ee"></div>
<div class="t" style="left:1913.52px;top:1575.71px;font-size:25.5px;line-height:25.5px;letter-spacing:-1.258px;color:#2d3748;-webkit-text-stroke:0.45px #2d3748;">PO</div>
<div class="abs" style="left:1980px;top:1556px;width:64px;height:64px;border-radius:50%;background:#f7f9fc;border:2px solid #e0e6ee"></div>
<svg class="ic" style="left:2000px;top:1576px;width:24px;height:24px" viewBox="0 0 24 24"><path d="M13.5 9.2C16 8 18.5 7 21.6 5.6" stroke="#2d3748" stroke-width="3.2" stroke-linecap="round" fill="none"/><path d="M20.5 4.2L23 3.6L22.6 6.8Z" fill="#2d3748"/><ellipse cx="9.2" cy="13.6" rx="7.9" ry="7.2" transform="rotate(-15 9.2 13.6)" fill="#2d3748"/><ellipse cx="8.6" cy="11.9" rx="5.3" ry="3.2" transform="rotate(-22 8.6 11.9)" fill="#f7f9fc"/></svg>
<div class="abs" style="left:2060px;top:1556px;width:64px;height:64px;border-radius:50%;background:#f7f9fc;border:2px solid #e0e6ee"></div>
<svg class="ic" style="left:0;top:0;width:1px;height:1px"><path d="M2084.4 1587.7H2099.6M2092.4 1580.5L2099.6 1587.7L2092.4 1594.9" stroke="#2d3748" stroke-width="2.2" fill="none" stroke-linecap="round" stroke-linejoin="round"/></svg>
<div class="abs" style="left:158px;top:1640.00px;width:2208px;height:2px;background:#e8edf3"></div>
<div class="abs" style="left:182.3px;top:1678.4px;width:32px;height:31px;background:#fff;border:3.2px solid #e2e8f0;border-radius:8px"></div>
<div class="t" style="left:311.10px;top:1679.35px;font-size:29px;line-height:29px;letter-spacing:-0.829px;color:#171a22;text-decoration:underline;text-decoration-thickness:2px;text-underline-offset:7px;">2023-WO-Merlot</div>
<div class="t" style="left:786.60px;top:1679.35px;font-size:29px;line-height:29px;letter-spacing:0.543px;color:#171a22;">10/05/2023</div>
<div class="t" style="left:1209.80px;top:1679.35px;font-size:29px;line-height:29px;letter-spacing:-0.500px;color:#171a22;">750 gal</div>
<div class="t" style="left:1491.60px;top:1679.35px;font-size:29px;line-height:29px;letter-spacing:-1.595px;color:#171a22;text-decoration:underline;text-decoration-thickness:2px;text-underline-offset:7px;">FT-2</div>
<div class="abs" style="left:1820px;top:1662px;width:64px;height:64px;border-radius:50%;border:1.5px dotted #f0f2f5"></div>
<svg class="ic" style="left:1840px;top:1682px;width:24px;height:24px;" viewBox="0 0 24 24" fill="none" stroke="#eef1f5" stroke-width="2" stroke-linecap="round" stroke-linejoin="round"><path d="M9 3h6"/><path d="M10 9h4"/><path d="M10 3v6l-4 11a.7 .7 0 0 0 .5 1h11a.7 .7 0 0 0 .5 -1l-4 -11v-6"/></svg>
<svg class="ic" style="left:0;top:0;width:1px;height:1px"><path d="M1859.5 1716L1869 1725.5L1888 1706" stroke="#c9e1a9" stroke-width="3" fill="none" stroke-linecap="round" stroke-linejoin="round"/></svg>
<div class="abs" style="left:1900px;top:1662px;width:64px;height:64px;border-radius:50%;background:#f7f9fc;border:2px solid #e0e6ee"></div>
<div class="t" style="left:1913.52px;top:1681.71px;font-size:25.5px;line-height:25.5px;letter-spacing:-1.258px;color:#2d3748;-webkit-text-stroke:0.45px #2d3748;">PO</div>
<div class="abs" style="left:1980px;top:1662px;width:64px;height:64px;border-radius:50%;background:#f7f9fc;border:2px solid #e0e6ee"></div>
<svg class="ic" style="left:2000px;top:1682px;width:24px;height:24px" viewBox="0 0 24 24"><path d="M13.5 9.2C16 8 18.5 7 21.6 5.6" stroke="#2d3748" stroke-width="3.2" stroke-linecap="round" fill="none"/><path d="M20.5 4.2L23 3.6L22.6 6.8Z" fill="#2d3748"/><ellipse cx="9.2" cy="13.6" rx="7.9" ry="7.2" transform="rotate(-15 9.2 13.6)" fill="#2d3748"/><ellipse cx="8.6" cy="11.9" rx="5.3" ry="3.2" transform="rotate(-22 8.6 11.9)" fill="#f7f9fc"/></svg>
<div class="abs" style="left:2060px;top:1662px;width:64px;height:64px;border-radius:50%;background:#f7f9fc;border:2px solid #e0e6ee"></div>
<svg class="ic" style="left:0;top:0;width:1px;height:1px"><path d="M2084.4 1693.7H2099.6M2092.4 1686.5L2099.6 1693.7L2092.4 1700.9" stroke="#2d3748" stroke-width="2.2" fill="none" stroke-linecap="round" stroke-linejoin="round"/></svg>
<div class="abs" style="left:158px;top:1746.00px;width:2208px;height:2px;background:#e8edf3"></div>
<div class="abs" style="left:182.3px;top:1784.4px;width:32px;height:31px;background:#fff;border:3.2px solid #e2e8f0;border-radius:8px"></div>
<div class="t" style="left:311.10px;top:1785.35px;font-size:29px;line-height:29px;letter-spacing:-1.834px;color:#171a22;text-decoration:underline;text-decoration-thickness:2px;text-underline-offset:7px;">2024OS</div>
<div class="t" style="left:787.60px;top:1785.35px;font-size:29px;line-height:29px;letter-spacing:0.321px;color:#171a22;">07/02/2024</div>
<div class="t" style="left:1210.80px;top:1785.35px;font-size:29px;line-height:29px;letter-spacing:-0.667px;color:#171a22;">465 gal</div>
<div class="t" style="left:1491.60px;top:1785.35px;font-size:29px;line-height:29px;letter-spacing:-1.929px;color:#171a22;text-decoration:underline;text-decoration-thickness:2px;text-underline-offset:7px;">FT-4</div>
<div class="abs" style="left:1820px;top:1768px;width:64px;height:64px;border-radius:50%;border:1.5px dotted #f0f2f5"></div>
<svg class="ic" style="left:1840px;top:1788px;width:24px;height:24px;" viewBox="0 0 24 24" fill="none" stroke="#eef1f5" stroke-width="2" stroke-linecap="round" stroke-linejoin="round"><path d="M9 3h6"/><path d="M10 9h4"/><path d="M10 3v6l-4 11a.7 .7 0 0 0 .5 1h11a.7 .7 0 0 0 .5 -1l-4 -11v-6"/></svg>
<div class="abs" style="left:1900px;top:1768px;width:64px;height:64px;border-radius:50%;border:1.5px dotted #f0f2f5"></div>
<div class="t" style="left:1913.52px;top:1787.71px;font-size:25.5px;line-height:25.5px;letter-spacing:-1.258px;color:#a4a9b3;-webkit-text-stroke:0.45px #a4a9b3;">PO</div>
<div class="abs" style="left:1980px;top:1768px;width:64px;height:64px;border-radius:50%;border:1.5px dotted #f0f2f5"></div>
<svg class="ic" style="left:2000px;top:1788px;width:24px;height:24px" viewBox="0 0 24 24"><path d="M13.5 9.2C16 8 18.5 7 21.6 5.6" stroke="#eff2f5" stroke-width="3.2" stroke-linecap="round" fill="none"/><path d="M20.5 4.2L23 3.6L22.6 6.8Z" fill="#eff2f5"/><ellipse cx="9.2" cy="13.6" rx="7.9" ry="7.2" transform="rotate(-15 9.2 13.6)" fill="#eff2f5"/><ellipse cx="8.6" cy="11.9" rx="5.3" ry="3.2" transform="rotate(-22 8.6 11.9)" fill="#ffffff"/></svg>
<div class="abs" style="left:2060px;top:1768px;width:64px;height:64px;border-radius:50%;background:#f7f9fc;border:2px solid #e0e6ee"></div>
<svg class="ic" style="left:0;top:0;width:1px;height:1px"><path d="M2084.4 1799.7H2099.6M2092.4 1792.5L2099.6 1799.7L2092.4 1806.9" stroke="#2d3748" stroke-width="2.2" fill="none" stroke-linecap="round" stroke-linejoin="round"/></svg>
</div>
</body></html>
